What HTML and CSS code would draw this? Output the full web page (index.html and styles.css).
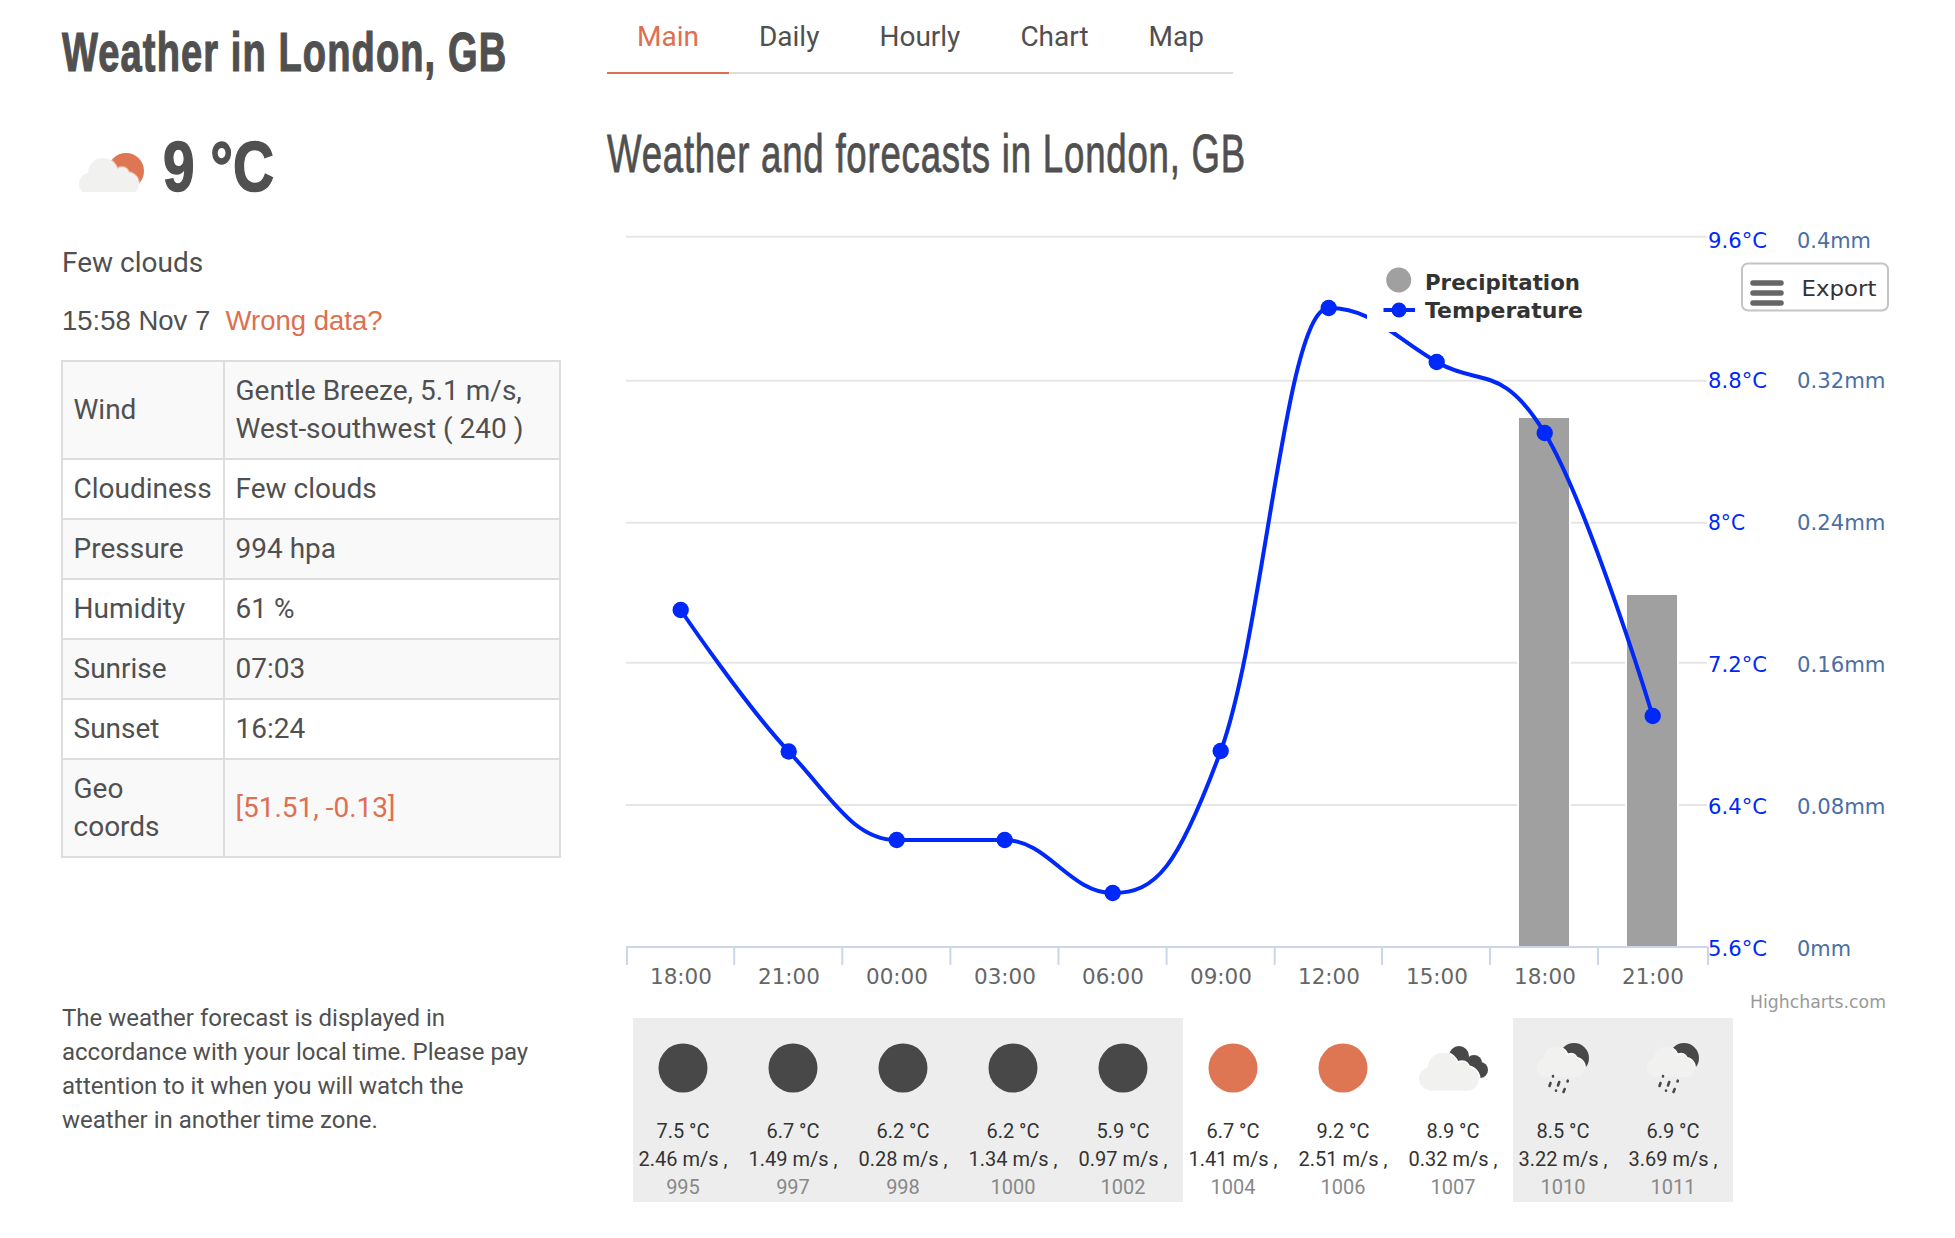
FILE: index.html
```html
<!DOCTYPE html>
<html lang="en">
<head>
<meta charset="utf-8">
<title>Weather in London, GB</title>
<link rel="stylesheet" href="styles.css">
</head>
<body>
<svg class="defs" width="0" height="0" aria-hidden="true">
  <defs>
    <symbol id="cloud" overflow="visible">
      <circle cx="11.5" cy="26" r="11.5"/>
      <circle cx="24" cy="15" r="15"/>
      <circle cx="48" cy="26" r="12"/>
      <circle cx="43" cy="16" r="7"/>
      <rect x="11" y="20" width="37" height="18"/>
    </symbol>
    <clipPath id="bigsun"><circle cx="47" cy="13" r="18"/></clipPath>
    <clipPath id="moon"><circle cx="61" cy="20" r="15.5"/></clipPath>
    <clipPath id="lobes">
      <circle cx="56" cy="18" r="10"/><circle cx="71" cy="25" r="8"/><circle cx="77" cy="32" r="8"/>
    </clipPath>
    <symbol id="rain" overflow="visible">
      <circle class="moon-fill" cx="61" cy="20" r="15"/>
      <g clip-path="url(#moon)"><use class="halo" href="#cloud" transform="translate(23.7 8.7) scale(.8)"/></g>
      <use class="cloud-fill" href="#cloud" transform="translate(23.7 8.7) scale(.8)"/>
      <path class="drops" d="M40 38v.5M36.5 48l1-3M45 47.500l1.200-3.500M54.500 43.500l.3-.8M43 52.500v.2M50.500 54l1.200-3"/>
    </symbol>
  </defs>
</svg>
<div class="page">
  <aside class="side">
    <h1 class="city">Weather in London, GB</h1>
    <div class="now">
      <svg class="now-icon" width="70" height="50" viewBox="0 0 70 50">
        <g transform="translate(0 16)">
          <circle class="sun-fill" cx="47" cy="13" r="18"/>
          <g clip-path="url(#bigsun)"><use class="halo-light" href="#cloud"/></g>
          <use class="cloud-fill" href="#cloud"/>
        </g>
      </svg>
      <span class="temp">9 °C</span>
    </div>
    <p class="desc">Few clouds</p>
    <p class="stamp">15:58 Nov 7 &nbsp;<a class="accent" href="#">Wrong data?</a></p>
    <table class="facts">
      <colgroup><col class="col-key"><col></colgroup>
      <tr><td>Wind</td><td>Gentle Breeze, 5.1 m/s,<br>West-southwest ( 240 )</td></tr>
      <tr><td>Cloudiness</td><td>Few clouds</td></tr>
      <tr><td>Pressure</td><td>994 hpa</td></tr>
      <tr><td>Humidity</td><td>61 %</td></tr>
      <tr><td>Sunrise</td><td>07:03</td></tr>
      <tr><td>Sunset</td><td>16:24</td></tr>
      <tr><td>Geo<br>coords</td><td><a class="accent" href="#">[51.51, -0.13]</a></td></tr>
    </table>
    <p class="note">The weather forecast is displayed in<br>accordance with your local time. Please pay<br>attention to it when you will watch the<br>weather in another time zone.</p>
  </aside>
  <main class="content">
    <nav class="tabs">
      <a class="tab active" href="#">Main</a>
      <a class="tab" href="#">Daily</a>
      <a class="tab" href="#">Hourly</a>
      <a class="tab" href="#">Chart</a>
      <a class="tab" href="#">Map</a>
    </nav>
    <h2 class="title">Weather and forecasts in London, GB</h2>
    <svg class="chart" width="1300" height="795" viewBox="607 220 1300 795">
      <g class="grid">
        <path d="M626 236.700H1707M626 380.700H1707M626 522.700H1707M626 662.700H1707M626 805H1707"/>
      </g>
      <rect class="bar" x="1519" y="418" width="50" height="529"/>
      <rect class="bar" x="1627" y="595" width="50" height="352"/>
      <path class="axis" d="M626 947H1708M627 947v18M734.200 947v18M842.300 947v18M950.400 947v18M1058.500 947v18M1166.600 947v18M1274.700 947v18M1382 947v18M1490 947v18M1598 947v18M1708 947v18"/>
      <path class="series" d="M680.700 610C680.700 610 745.500 705.500 788.700 751.500C831.900 797.500 853.500 840 896.700 840C939.900 840 961.500 840 1004.700 840C1047.900 840 1069.500 893 1112.700 893C1155.900 893 1177.500 868 1220.700 751C1263.900 634 1285.500 308 1328.700 308C1371.900 308 1393.500 337 1436.700 362C1479.900 387 1501.500 362.200 1544.700 433C1587.900 503.800 1652.700 716 1652.700 716"/>
      <g class="dots">
        <circle cx="680.700" cy="610" r="8.200"/><circle cx="788.700" cy="751.500" r="8.200"/><circle cx="896.700" cy="840" r="8.200"/><circle cx="1004.700" cy="840" r="8.200"/><circle cx="1112.700" cy="893" r="8.200"/><circle cx="1220.700" cy="751" r="8.200"/><circle cx="1328.700" cy="308" r="8.200"/><circle cx="1436.700" cy="362" r="8.200"/><circle cx="1544.700" cy="433" r="8.200"/><circle cx="1652.700" cy="716" r="8.200"/>
      </g>
      <rect class="legend-bg" x="1367" y="262" width="225" height="70"/>
      <circle class="legend-rain" cx="1398.700" cy="280" r="12.500"/>
      <path class="legend-line" d="M1383.500 310H1415"/>
      <circle class="legend-dot" cx="1399" cy="310" r="7.500"/>
      <text class="legend" x="1425" y="290" textLength="155" lengthAdjust="spacingAndGlyphs">Precipitation</text>
      <text class="legend" x="1425" y="318" textLength="158" lengthAdjust="spacingAndGlyphs">Temperature</text>
      <rect class="export-box" x="1742" y="263.500" width="146" height="47" rx="6"/>
      <path class="export-bars" d="M1753 283H1781M1753 293H1781M1753 303H1781"/>
      <text class="export" x="1801.500" y="296" textLength="75" lengthAdjust="spacingAndGlyphs">Export</text>
      <g class="tick-temp">
        <text x="1708" y="248" textLength="59" lengthAdjust="spacingAndGlyphs">9.6°C</text>
        <text x="1708" y="388" textLength="59" lengthAdjust="spacingAndGlyphs">8.8°C</text>
        <text x="1708" y="530" textLength="37" lengthAdjust="spacingAndGlyphs">8°C</text>
        <text x="1708" y="672" textLength="59" lengthAdjust="spacingAndGlyphs">7.2°C</text>
        <text x="1708" y="814" textLength="59" lengthAdjust="spacingAndGlyphs">6.4°C</text>
        <text x="1708" y="956" textLength="59" lengthAdjust="spacingAndGlyphs">5.6°C</text>
      </g>
      <g class="tick-rain">
        <text x="1797" y="248" textLength="74" lengthAdjust="spacingAndGlyphs">0.4mm</text>
        <text x="1797" y="388" textLength="88.500" lengthAdjust="spacingAndGlyphs">0.32mm</text>
        <text x="1797" y="530" textLength="88.500" lengthAdjust="spacingAndGlyphs">0.24mm</text>
        <text x="1797" y="672" textLength="88.500" lengthAdjust="spacingAndGlyphs">0.16mm</text>
        <text x="1797" y="814" textLength="88.500" lengthAdjust="spacingAndGlyphs">0.08mm</text>
        <text x="1797" y="956" textLength="54" lengthAdjust="spacingAndGlyphs">0mm</text>
      </g>
      <g class="tick-x">
        <text x="681" y="984" textLength="62" lengthAdjust="spacingAndGlyphs">18:00</text>
        <text x="789" y="984" textLength="62" lengthAdjust="spacingAndGlyphs">21:00</text>
        <text x="897" y="984" textLength="62" lengthAdjust="spacingAndGlyphs">00:00</text>
        <text x="1005" y="984" textLength="62" lengthAdjust="spacingAndGlyphs">03:00</text>
        <text x="1113" y="984" textLength="62" lengthAdjust="spacingAndGlyphs">06:00</text>
        <text x="1221" y="984" textLength="62" lengthAdjust="spacingAndGlyphs">09:00</text>
        <text x="1329" y="984" textLength="62" lengthAdjust="spacingAndGlyphs">12:00</text>
        <text x="1437" y="984" textLength="62" lengthAdjust="spacingAndGlyphs">15:00</text>
        <text x="1545" y="984" textLength="62" lengthAdjust="spacingAndGlyphs">18:00</text>
        <text x="1653" y="984" textLength="62" lengthAdjust="spacingAndGlyphs">21:00</text>
      </g>
      <text class="credit" x="1750" y="1008" textLength="136" lengthAdjust="spacingAndGlyphs">Highcharts.com</text>
    </svg>
    <div class="strip">
      <div class="cell shade">
        <svg class="icon" width="100" height="60" viewBox="0 0 100 60"><circle class="moon-fill" cx="50" cy="30" r="24.500"/></svg>
        <div>7.5 °C</div><div>2.46 m/s ,</div><div class="hpa">995</div>
      </div>
      <div class="cell shade">
        <svg class="icon" width="100" height="60" viewBox="0 0 100 60"><circle class="moon-fill" cx="50" cy="30" r="24.500"/></svg>
        <div>6.7 °C</div><div>1.49 m/s ,</div><div class="hpa">997</div>
      </div>
      <div class="cell shade">
        <svg class="icon" width="100" height="60" viewBox="0 0 100 60"><circle class="moon-fill" cx="50" cy="30" r="24.500"/></svg>
        <div>6.2 °C</div><div>0.28 m/s ,</div><div class="hpa">998</div>
      </div>
      <div class="cell shade">
        <svg class="icon" width="100" height="60" viewBox="0 0 100 60"><circle class="moon-fill" cx="50" cy="30" r="24.500"/></svg>
        <div>6.2 °C</div><div>1.34 m/s ,</div><div class="hpa">1000</div>
      </div>
      <div class="cell shade">
        <svg class="icon" width="100" height="60" viewBox="0 0 100 60"><circle class="moon-fill" cx="50" cy="30" r="24.500"/></svg>
        <div>5.9 °C</div><div>0.97 m/s ,</div><div class="hpa">1002</div>
      </div>
      <div class="cell">
        <svg class="icon" width="100" height="60" viewBox="0 0 100 60"><circle class="sun-fill" cx="50" cy="30" r="24.500"/></svg>
        <div>6.7 °C</div><div>1.41 m/s ,</div><div class="hpa">1004</div>
      </div>
      <div class="cell">
        <svg class="icon" width="100" height="60" viewBox="0 0 100 60"><circle class="sun-fill" cx="50" cy="30" r="24.500"/></svg>
        <div>9.2 °C</div><div>2.51 m/s ,</div><div class="hpa">1006</div>
      </div>
      <div class="cell">
        <svg class="icon" width="100" height="60" viewBox="0 0 100 60">
          <g class="moon-fill"><circle cx="56" cy="18" r="10"/><circle cx="71" cy="25" r="8"/><circle cx="77" cy="32" r="8"/></g>
          <g clip-path="url(#lobes)"><use class="halo" href="#cloud" transform="translate(16 14.700)"/></g>
          <use class="cloud-fill" href="#cloud" transform="translate(16 14.700)"/>
        </svg>
        <div>8.9 °C</div><div>0.32 m/s ,</div><div class="hpa">1007</div>
      </div>
      <div class="cell shade">
        <svg class="icon" width="100" height="60" viewBox="0 0 100 60"><use href="#rain"/></svg>
        <div>8.5 °C</div><div>3.22 m/s ,</div><div class="hpa">1010</div>
      </div>
      <div class="cell shade">
        <svg class="icon" width="100" height="60" viewBox="0 0 100 60"><use href="#rain"/></svg>
        <div>6.9 °C</div><div>3.69 m/s ,</div><div class="hpa">1011</div>
      </div>
    </div>
  </main>
</div>
</body>
</html>
```
FILE: styles.css
```css
* { box-sizing: border-box; }
html, body { margin: 0; background: #fff; }
body { color: #505050; font-family: Roboto, "Liberation Sans", sans-serif; overflow-x: hidden; }
.defs { position: absolute; }
.page { display: flex; gap: 46px; padding-left: 62px; }
.side { width: 499px; flex: none; }
.content { flex: 1; }
a { text-decoration: none; }
.accent { color: #de6f50; }

.city {
  margin: 22px 0 0;
  font: 700 56px/60px "Liberation Sans", sans-serif;
  letter-spacing: 1.600px;
  color: #505050;
  white-space: nowrap;
  transform: scaleX(.68);
  transform-origin: left center;
  -webkit-text-stroke: 1.200px #505050;
}
.now { display: flex; align-items: center; margin-top: 47px; height: 76px; }
.now-icon { flex: none; margin: 0 14px 0 17px; }
.temp {
  display: inline-block;
  font: 700 71px/76px "Liberation Sans", sans-serif;
  white-space: nowrap;
  transform: scaleX(.8);
  transform-origin: left center;
  -webkit-text-stroke: 1.500px #505050;
}
.desc { margin: 39px 0 0; font-size: 28px; line-height: 38px; }
.stamp { margin: 20px 0 0; font: 27.500px/38px "Liberation Sans", sans-serif; }

.facts { width: 500px; margin: 20px 0 0 -1px; border-collapse: collapse; font-size: 28px; line-height: 38px; }
.col-key { width: 162px; }
.facts td { border: 2px solid #ddd; padding: 10px 11px 10px 10.500px; }
.facts tr:nth-child(odd) td { background: #f9f9f9; }
.note { margin: 143px 0 0; font-size: 24px; line-height: 34px; }

.tabs { display: flex; width: 626px; height: 74px; border-bottom: 2px solid #ddd; }
.tab { height: 74px; padding: 17px 30px 0; font-size: 28px; line-height: 40px; color: #505050; }
.tab.active { color: #de6f50; border-bottom: 2px solid #de6f50; }
.title {
  margin: 0;
  padding-top: 50px;
  height: 146px;
  font: 400 53px/60px "Liberation Sans", sans-serif;
  letter-spacing: 1.150px;
  color: #505050;
  white-space: nowrap;
  transform: scaleX(.69);
  transform-origin: left center;
  -webkit-text-stroke: .800px #505050;
}
.chart { display: block; }
.grid path { fill: none; stroke: #e6e6e6; stroke-width: 2; }
.bar { fill: #a0a0a0; stroke: #fff; stroke-width: 4; paint-order: stroke; }
.axis { fill: none; stroke: #ccd6eb; stroke-width: 2; }
.series { fill: none; stroke: #0028f8; stroke-width: 4; }
.dots circle, .legend-dot { fill: #0028f8; }
.legend-bg { fill: #fff; }
.legend-rain { fill: #a0a0a0; }
.legend-line { fill: none; stroke: #0028f8; stroke-width: 4; }
.legend { font: 700 22px "DejaVu Sans", sans-serif; fill: #333; }
.export-box { fill: #fff; stroke: #c4c4c4; stroke-width: 2; }
.export-bars { fill: none; stroke: #666; stroke-width: 5.500; stroke-linecap: round; }
.export { font: 22px "DejaVu Sans", sans-serif; fill: #333; }
.tick-temp text { font: 22px "DejaVu Sans", sans-serif; fill: #0028f8; }
.tick-rain text { font: 22px "DejaVu Sans", sans-serif; fill: #4a6fa5; }
.tick-x text { font: 22px "DejaVu Sans", sans-serif; fill: #666; text-anchor: middle; }
.credit { font: 18px "DejaVu Sans", sans-serif; fill: #999; }

.strip { display: flex; margin: 3px 0 0 26px; font-size: 20px; line-height: 28px; color: #333; }
.cell { width: 110px; height: 184px; padding: 20px 10px 0 0; text-align: center; }
.cell.shade { background: #ededed; }
.icon { display: block; margin-bottom: 19px; }
.hpa { color: #888; }
.moon-fill { fill: #484848; }
.sun-fill { fill: #de7654; }
.cloud-fill { fill: #f1f1ef; }
.halo { fill: #fff; stroke: #fff; stroke-width: 3; }
.halo-light { fill: #f3b49e; stroke: #f3b49e; stroke-width: 2; }
.drops { fill: none; stroke: #484848; stroke-width: 2.600; stroke-linecap: round; }
```
